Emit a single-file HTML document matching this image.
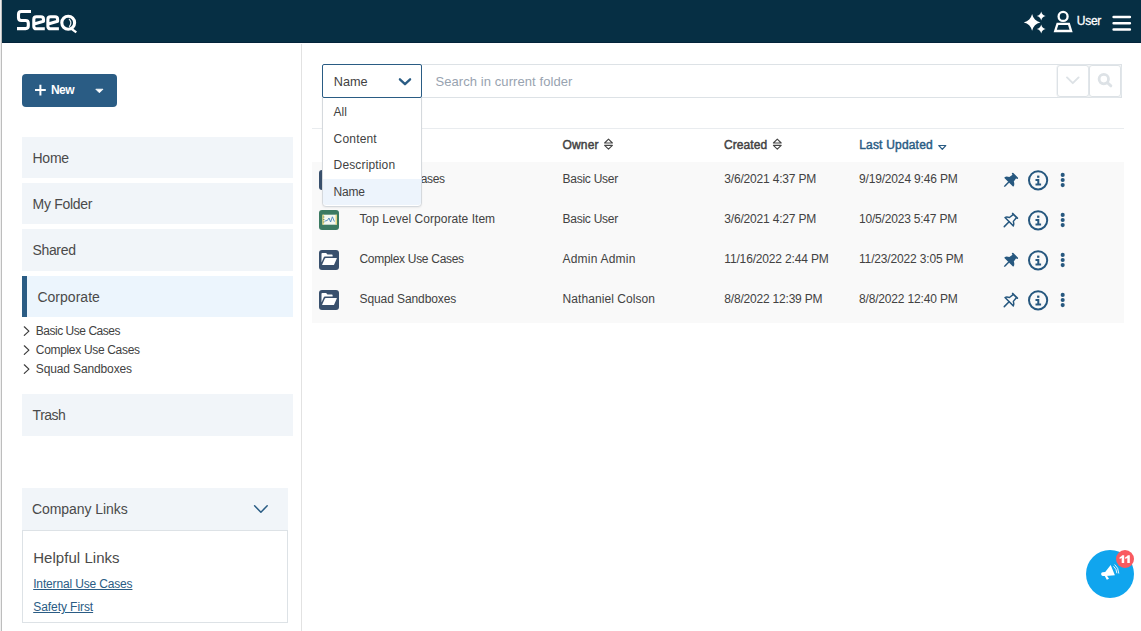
<!DOCTYPE html>
<html>
<head>
<meta charset="utf-8">
<title>Seeq</title>
<style>
html,body{margin:0;padding:0;}
body{width:1141px;height:631px;overflow:hidden;background:#fff;position:relative;font-family:"Liberation Sans",sans-serif;color:#3b3b3b;font-size:12px;}
.abs{position:absolute;}
.t{position:absolute;white-space:nowrap;line-height:1;}
svg{position:absolute;left:0;top:0;overflow:visible;}
.nav{position:absolute;left:22px;width:271px;background:#f1f5f9;}
</style>
</head>
<body>

<div class="abs" style="left:0;top:0;width:1px;height:631px;background:#efefef;"></div>
<div class="abs" style="left:1px;top:0;width:1px;height:631px;background:#bdbdbd;"></div>
<div class="abs" id="hdr" style="left:2px;top:0;width:1139px;height:43px;background:#062f44;"></div>
<div class="abs" style="left:2px;top:42px;width:1139px;height:1px;background:#03233a;"></div>
<div class="abs" style="left:301px;top:44px;width:1px;height:587px;background:#e2e2e2;"></div>
<div class="abs" style="left:22px;top:74px;width:95px;height:33px;background:#2a5c84;border-radius:4px;"></div>
<div class="t" id="newtxt" style="left:51px;top:83.9px;font-size:12px;color:#fff;font-weight:bold;letter-spacing:-0.594px;">New</div>
<div class="nav" style="top:137px;height:41px;"></div>
<div class="nav" style="top:183px;height:40.5px;"></div>
<div class="nav" style="top:229px;height:42px;"></div>
<div class="nav" style="top:394px;height:42px;"></div>
<div class="nav" style="top:276px;height:41px;background:#ecf5fd;"></div>
<div class="abs" style="left:22px;top:276px;width:5px;height:41px;background:#2a5c84;"></div>
<div class="t" id="nav_Home" style="left:32.5px;top:151.35px;font-size:14px;color:#4a4a4a;font-weight:normal;letter-spacing:-0.253px;">Home</div>
<div class="t" id="nav_MyFolder" style="left:32.5px;top:197.35px;font-size:14px;color:#4a4a4a;font-weight:normal;letter-spacing:-0.279px;">My Folder</div>
<div class="t" id="nav_Shared" style="left:32.4px;top:243.15px;font-size:14px;color:#4a4a4a;font-weight:normal;letter-spacing:-0.311px;">Shared</div>
<div class="t" id="nav_Trash" style="left:32.6px;top:408.15px;font-size:14px;color:#4a4a4a;font-weight:normal;letter-spacing:-0.495px;">Trash</div>
<div class="t" id="nav_Corporate" style="left:37.4px;top:289.85px;font-size:14px;color:#4a4a4a;font-weight:normal;letter-spacing:0.029px;">Corporate</div>
<div class="t" id="tree0" style="left:35.8px;top:324.84px;font-size:12px;color:#424242;font-weight:normal;letter-spacing:-0.477px;">Basic Use Cases</div>
<div class="t" id="tree1" style="left:35.8px;top:343.84px;font-size:12px;color:#424242;font-weight:normal;letter-spacing:-0.323px;">Complex Use Cases</div>
<div class="t" id="tree2" style="left:35.8px;top:362.84px;font-size:12px;color:#424242;font-weight:normal;letter-spacing:-0.128px;">Squad Sandboxes</div>
<div class="abs" style="left:22px;top:488px;width:266px;height:42px;background:#f1f5f9;"></div>
<div class="t" id="cltxt" style="left:32px;top:502.45px;font-size:14px;color:#4a4a4a;font-weight:normal;letter-spacing:-0.067px;">Company Links</div>
<div class="abs" style="left:22px;top:530px;width:264px;height:91px;border:1px solid #dde2e6;background:#fff;"></div>
<div class="t" id="hltxt" style="left:33.2px;top:549.5px;font-size:15px;color:#4a4a4a;font-weight:normal;letter-spacing:0.042px;">Helpful Links</div>
<div class="t" id="lnk1" style="left:33.2px;top:578.04px;font-size:12px;color:#2a5c84;font-weight:normal;letter-spacing:-0.156px;text-decoration:underline;">Internal Use Cases</div>
<div class="t" id="lnk2" style="left:33.2px;top:601.14px;font-size:12px;color:#2a5c84;font-weight:normal;letter-spacing:-0.062px;text-decoration:underline;">Safety First</div>
<div class="abs" style="left:421px;top:64px;width:699px;height:32px;border:1px solid #dde2e6;background:#fff;"></div>
<div class="t" id="ph" style="left:435.4px;top:75px;font-size:13px;color:#98a3b0;font-weight:normal;letter-spacing:0.082px;">Search in current folder</div>
<div class="abs" style="left:1057px;top:65px;width:30px;height:30px;border:1px solid #dde2e6;border-radius:3px;box-shadow:0 0 0 0.5px #e6eaed;"></div>
<div class="abs" style="left:1089px;top:65px;width:30px;height:30px;border:1px solid #dde2e6;border-radius:3px;box-shadow:0 0 0 0.5px #e6eaed;"></div>
<div class="abs" style="left:312px;top:128px;width:812px;height:1px;background:#e9ecef;"></div>
<div class="t" id="th-owner" style="left:562.4px;top:138.84px;font-size:12px;color:#424242;font-weight:normal;letter-spacing:0.214px;-webkit-text-stroke:0.45px #424242;">Owner</div>
<div class="t" id="th-created" style="left:724.1px;top:138.84px;font-size:12px;color:#424242;font-weight:normal;letter-spacing:0.049px;-webkit-text-stroke:0.45px #424242;">Created</div>
<div class="t" id="th-upd" style="left:859.2px;top:138.84px;font-size:12px;color:#2a5c84;font-weight:normal;letter-spacing:0.192px;-webkit-text-stroke:0.45px #2a5c84;">Last Updated</div>
<div class="abs" style="left:312px;top:162px;width:812px;height:161px;background:#f9f9f9;"></div>
<div class="t" id="r0c0" style="left:359.5px;top:172.84px;font-size:12px;color:#424242;font-weight:normal;letter-spacing:-0.427px;">Basic Use Cases</div>
<div class="t" id="r0c1" style="left:562.5px;top:172.84px;font-size:12px;color:#424242;font-weight:normal;letter-spacing:-0.257px;">Basic User</div>
<div class="t" id="r0c2" style="left:724.3px;top:172.84px;font-size:12px;color:#424242;font-weight:normal;letter-spacing:-0.182px;">3/6/2021 4:37 PM</div>
<div class="t" id="r0c3" style="left:859.0px;top:172.84px;font-size:12px;color:#424242;font-weight:normal;letter-spacing:-0.167px;">9/19/2024 9:46 PM</div>
<div class="t" id="r1c0" style="left:359.5px;top:212.84px;font-size:12px;color:#424242;font-weight:normal;letter-spacing:0.037px;">Top Level Corporate Item</div>
<div class="t" id="r1c1" style="left:562.5px;top:212.84px;font-size:12px;color:#424242;font-weight:normal;letter-spacing:-0.257px;">Basic User</div>
<div class="t" id="r1c2" style="left:724.3px;top:212.84px;font-size:12px;color:#424242;font-weight:normal;letter-spacing:-0.182px;">3/6/2021 4:27 PM</div>
<div class="t" id="r1c3" style="left:859.0px;top:212.84px;font-size:12px;color:#424242;font-weight:normal;letter-spacing:-0.198px;">10/5/2023 5:47 PM</div>
<div class="t" id="r2c0" style="left:359.5px;top:252.84px;font-size:12px;color:#424242;font-weight:normal;letter-spacing:-0.298px;">Complex Use Cases</div>
<div class="t" id="r2c1" style="left:562.5px;top:252.84px;font-size:12px;color:#424242;font-weight:normal;letter-spacing:0.21px;">Admin Admin</div>
<div class="t" id="r2c2" style="left:724.3px;top:252.84px;font-size:12px;color:#424242;font-weight:normal;letter-spacing:-0.159px;">11/16/2022 2:44 PM</div>
<div class="t" id="r2c3" style="left:859.0px;top:252.84px;font-size:12px;color:#424242;font-weight:normal;letter-spacing:-0.159px;">11/23/2022 3:05 PM</div>
<div class="t" id="r3c0" style="left:359.5px;top:292.84px;font-size:12px;color:#424242;font-weight:normal;letter-spacing:-0.092px;">Squad Sandboxes</div>
<div class="t" id="r3c1" style="left:562.5px;top:292.84px;font-size:12px;color:#424242;font-weight:normal;letter-spacing:0.074px;">Nathaniel Colson</div>
<div class="t" id="r3c2" style="left:724.3px;top:292.84px;font-size:12px;color:#424242;font-weight:normal;letter-spacing:-0.198px;">8/8/2022 12:39 PM</div>
<div class="t" id="r3c3" style="left:859.0px;top:292.84px;font-size:12px;color:#424242;font-weight:normal;letter-spacing:-0.167px;">8/8/2022 12:40 PM</div>
<div class="abs" style="left:319px;top:170px;width:20px;height:20px;border-radius:3px;background:#39506d;"></div>
<div class="abs" style="left:319px;top:210px;width:20px;height:20px;border-radius:3px;background:#3c7a62;"></div>
<div class="abs" style="left:319px;top:250px;width:20px;height:20px;border-radius:3px;background:#39506d;"></div>
<div class="abs" style="left:319px;top:290px;width:20px;height:20px;border-radius:3px;background:#39506d;"></div>
<div class="abs" id="dd" style="left:322px;top:97px;width:98px;height:107.5px;border:1px solid #d5d9dd;border-radius:0 0 4px 4px;background:#fff;box-shadow:0 1px 2px rgba(0,0,0,0.06);"></div>
<div class="abs" style="left:323px;top:179px;width:98px;height:26px;background:#edf4fc;border-radius:0 0 3px 3px;"></div>
<div class="t" id="opt0" style="left:333.6px;top:105.54px;font-size:12px;color:#424242;font-weight:normal;letter-spacing:-0.022px;">All</div>
<div class="t" id="opt1" style="left:333.6px;top:132.54px;font-size:12px;color:#424242;font-weight:normal;letter-spacing:0.178px;">Content</div>
<div class="t" id="opt2" style="left:333.6px;top:158.84px;font-size:12px;color:#424242;font-weight:normal;letter-spacing:0.147px;">Description</div>
<div class="t" id="opt3" style="left:333.6px;top:186.34px;font-size:12px;color:#424242;font-weight:normal;letter-spacing:-0.239px;">Name</div>
<div class="abs" id="sel" style="left:322px;top:64px;width:98px;height:32px;border:1px solid #2a5c84;border-radius:2px;background:#fff;"></div>
<div class="t" id="seltxt" style="left:333.8px;top:75.85px;font-size:12.7px;color:#424242;font-weight:normal;letter-spacing:-0.015px;">Name</div>
<div class="abs" style="left:1086px;top:550px;width:48px;height:48px;border-radius:50%;background:#10a5ee;"></div>
<div class="abs" style="left:1116px;top:550px;width:18px;height:18px;border-radius:50%;background:#f95a60;"></div>
<div class="t" id="usertxt" style="left:1076.8px;top:14.84px;font-size:12px;color:#fff;font-weight:normal;letter-spacing:-0.281px;-webkit-text-stroke:0.3px #fff;">User</div>
<svg id="icons" width="1141" height="631" viewBox="0 0 1141 631">
<!-- LOGO -->
<g id="logo" fill="none" stroke="#fff" stroke-width="3.1" stroke-linejoin="round">
  <path d="M31 11.5 H21.2 Q18.5 11.5 18.5 14.2 V17.8 Q18.5 20.5 21.2 20.5 H25.6 Q28.3 20.5 28.3 23.2 V25.8 Q28.3 28.6 25.6 28.6 H17"/>
  <path d="M44.8 28.8 H36.4 Q33.8 28.8 33.8 26.2 V19.4 Q33.8 16.8 36.4 16.8 H40.9 Q43.5 16.8 43.5 19.4 V21.3 L34.2 23.9"/>
  <path d="M58.9 28.8 H50.5 Q47.9 28.8 47.9 26.2 V19.4 Q47.9 16.8 50.5 16.8 H55 Q57.6 16.8 57.6 19.4 V21.3 L48.3 23.9"/>
  <ellipse cx="68.2" cy="22.7" rx="6.4" ry="6.5"/>
  <path d="M71.2 28.6 L76.3 32.4" stroke-width="2.4"/>
  <path d="M69 18.8 Q72.6 22.7 69.2 26.8" stroke-width="1.2" stroke="#e6ecef"/>
</g>

<!-- HEADER ICONS -->
<g id="sparkles" fill="#fff">
<path d="M1032.1 14.099999999999998 C1033.1 18.5 1036.0 21.4 1040.3999999999999 22.4 C1036.0 23.4 1033.1 26.299999999999997 1032.1 30.7 C1031.1 26.299999999999997 1028.1999999999998 23.4 1023.8 22.4 C1028.1999999999998 21.4 1031.1 18.5 1032.1 14.099999999999998Z"/>
<path d="M1041.2 11.600000000000001 C1041.75 14.000000000000002 1043.3 15.55 1045.7 16.1 C1043.3 16.650000000000002 1041.75 18.200000000000003 1041.2 20.6 C1040.65 18.200000000000003 1039.1000000000001 16.650000000000002 1036.7 16.1 C1039.1000000000001 15.55 1040.65 14.000000000000002 1041.2 11.600000000000001Z"/>
<path d="M1041.2 24.5 C1041.75 26.9 1043.3 28.45 1045.7 29 C1043.3 29.55 1041.75 31.1 1041.2 33.5 C1040.65 31.1 1039.1000000000001 29.55 1036.7 29 C1039.1000000000001 28.45 1040.65 26.9 1041.2 24.5Z"/>
</g>
<g id="usericon" fill="none" stroke="#fff" stroke-width="2.3">
  <circle cx="1063.1" cy="16.4" r="4.5"/>
  <path d="M1057.5 23.9 H1068.9 L1071.1 31 H1055.2 Z" stroke-linejoin="miter"/>
</g>
<g id="burger" stroke="#fff" stroke-width="2.5" stroke-linecap="round">
  <path d="M1113.6 16.9 H1129.9 M1113.6 23.2 H1129.9 M1113.6 29.5 H1129.9"/>
</g>

<!-- NEW BUTTON ICONS -->
<path d="M40.4 84.7 V95.4 M35 90.05 H45.8" stroke="#fff" stroke-width="2" fill="none"/>
<path d="M95.8 89.2 H103 L99.4 92.8 Z" fill="#fff" stroke="#fff" stroke-width="0.8" stroke-linejoin="round"/>

<!-- TREE CHEVRONS -->
<g fill="none" stroke="#3b3b3b" stroke-width="1.2" stroke-linecap="round" stroke-linejoin="round">
  <path d="M24.3 326.8 L28.9 331.1 L24.3 335.4"/>
  <path d="M24.3 345.8 L28.9 350.1 L24.3 354.4"/>
  <path d="M24.3 364.8 L28.9 369.1 L24.3 373.4"/>
</g>

<!-- COMPANY LINKS CHEVRON -->
<path d="M254.6 505.8 L260.9 512.2 L267.2 505.8" fill="none" stroke="#2a5c84" stroke-width="1.5" stroke-linecap="round" stroke-linejoin="round"/>

<!-- SEARCH BUTTON ICONS -->
<path d="M1067 77.4 L1072.8 83.2 L1078.6 77.4" fill="none" stroke="#dde2e6" stroke-width="1.9" stroke-linecap="round" stroke-linejoin="round"/>
<g fill="none" stroke="#dde2e6">
  <circle cx="1103.8" cy="79.1" r="4.7" stroke-width="2.8"/>
  <path d="M1107.6 82.9 L1110.9 85.9" stroke-width="2.8" stroke-linecap="round"/>
</g>

<!-- SELECT CHEVRON -->
<path d="M399.9 79.3 L405 84.2 L410.1 79.3" fill="none" stroke="#2a5c84" stroke-width="2.3" stroke-linecap="round" stroke-linejoin="round"/>

<!-- SORT ICONS -->
<g id="sorts" fill="none" stroke="#444" stroke-width="1.1" stroke-linejoin="round">
  <path d="M608.5 139.2 L612.4 143 H604.6 Z M604.6 145.4 H612.4 L608.5 149.2 Z"/>
  <path d="M777.3 139.2 L781.2 143 H773.4 Z M773.4 145.4 H781.2 L777.3 149.2 Z"/>
</g>
<path d="M938.8 145.5 H945.8 L942.3 149.3 Z" fill="none" stroke="#2a5c84" stroke-width="1.2" stroke-linejoin="round"/>

<!-- ROW ICONS: defs -->
<defs>
  <path id="tack" d="M298.028 214.267L285.793 96H328c13.255 0 24-10.745 24-24V24c0-13.255-10.745-24-24-24H56C42.745 0 32 10.745 32 24v48c0 13.255 10.745 24 24 24h42.207L85.972 214.267C37.465 236.82 0 277.261 0 328c0 13.255 10.745 24 24 24h136v104.007c0 1.242.289 2.467.845 3.578l24 48c2.941 5.882 11.364 5.893 14.311 0l24-48a8.008 8.008 0 0 0 .845-3.578V352h136c13.255 0 24-10.745 24-24 0-51.183-37.983-91.42-85.973-113.733z"/>
  <g id="pinF" fill="#27587f"><g transform="translate(9.97 -9.3) rotate(45) scale(1.02)">
    <path d="M-3.1 -7.8 H3.1 Q3.9 -7.8 3.9 -7 Q3.9 -6.1 3.1 -6.1 H2.5 L3.1 -2.2 Q5.9 -0.9 6.3 1.1 Q6.4 1.8 5.6 1.8 H-5.6 Q-6.4 1.8 -6.3 1.1 Q-5.9 -0.9 -3.1 -2.2 L-2.5 -6.1 H-3.1 Q-3.9 -6.1 -3.9 -7 Q-3.9 -7.8 -3.1 -7.8 Z"/>
    <path d="M-0.75 1.6 H0.75 V7 L0 8.5 L-0.75 7 Z"/>
  </g></g>
  <g id="pinO" fill="none" stroke="#27587f" stroke-linecap="round" stroke-linejoin="round"><g transform="translate(9.97 -9.3) rotate(45) scale(1.02)">
    <path d="M-3.2 -7 H3.2" stroke-width="1.7"/>
    <path d="M-2.2 -6.6 L-2.7 -2 Q-5.4 -0.7 -5.8 1.1 H5.8 Q5.4 -0.7 2.7 -2 L2.2 -6.6" stroke-width="1.45"/>
    <path d="M0 1.2 V7.9" stroke-width="1.5"/>
  </g></g>
  <g id="info" fill="none" stroke="#27587f">
    <circle cx="0" cy="0" r="9.1" stroke-width="2"/>
    <rect x="-1" y="-4.7" width="2.3" height="2.2" fill="#27587f" stroke="none"/>
    <path d="M-2.6 -0.4 H0.2 M0.2 -1.2 V4.2 M-2.6 4.2 H3" stroke-width="2"/>
  </g>
  <g id="kebab" fill="#27587f">
    <circle cx="0" cy="-5.1" r="2.05"/><circle cx="0" cy="0" r="2.05"/><circle cx="0" cy="5.1" r="2.05"/>
  </g>
  <g id="folder" fill="#fff">
    <path d="M2.7 3 H6.6 L8 4.4 H12.4 Q13.1 4.4 13.1 5.1 V6.6 H5.4 Q4.6 6.6 4.3 7.3 L2 12.6 V3.7 Q2 3 2.7 3 Z"/>
    <path d="M6.3 8 H17 Q17.6 8 17.3 8.6 L14.7 14.5 Q14.4 15.1 13.7 15.1 H3 Q2.4 15.1 2.7 14.5 L5.4 8.6 Q5.7 8 6.3 8 Z"/>
  </g>
</defs>

<use href="#pinF" x="1000" y="190.2"/>
<use href="#pinO" x="1000" y="230.2"/>
<use href="#pinF" x="1000" y="270.2"/>
<use href="#pinO" x="1000" y="310.2"/>
<use href="#info" x="1038.1" y="180.3"/>
<use href="#info" x="1038.1" y="220.3"/>
<use href="#info" x="1038.1" y="260.3"/>
<use href="#info" x="1038.1" y="300.3"/>
<use href="#kebab" x="1062.7" y="180"/>
<use href="#kebab" x="1062.7" y="220"/>
<use href="#kebab" x="1062.7" y="260"/>
<use href="#kebab" x="1062.7" y="300"/>

<use href="#folder" x="319.5" y="250"/>
<use href="#folder" x="319.5" y="290"/>

<!-- analysis icon -->
<g>
  <rect x="322.5" y="214.7" width="14.3" height="10" fill="#f4f8f2"/>
  <rect x="322.5" y="214.7" width="1.3" height="10" fill="#e8d36a"/>
  <rect x="335.6" y="214.7" width="1.2" height="10" fill="#e8d36a"/>
  <path d="M324.6 221.2 L327.4 220.4 L329 218 L330.6 222 L332.4 216.8 L334.4 221.6" fill="none" stroke="#4a86b8" stroke-width="0.9" stroke-linejoin="round"/>
  <path d="M323.2 217 h1.2 M323.2 219.5 h1.2 M323.2 222 h1.2" stroke="#3c7a62" stroke-width="0.8"/>
</g>

<!-- megaphone -->
<g fill="#fff">
  <path d="M1105.2 572 L1110.7 565.1 L1114.9 575.3 L1105.8 576.1 L1102.6 576 Q1101.1 575.6 1101.1 574 Q1101.1 572.4 1102.6 572.2 Z"/>
  <path d="M1104.5 575.6 L1106.8 575.4 L1109 578.8 L1106.8 579.8 Z"/>
  <path d="M1113.5 566.3 Q1116.6 568.8 1116.9 573.3" fill="none" stroke="#fff" stroke-width="0.9"/>
  <path d="M1114.6 564.5 Q1118.6 567.6 1118.8 573.5" fill="none" stroke="#fff" stroke-width="0.9"/>
  <path d="M1124.2 555.2 V563.1 H1121.7 V557.9 L1119.6000000000001 559.1 V557.2 Q1121.3 556.6 1122.2 555.2 Z"/>
  <path d="M1129.8 555.2 V563.1 H1127.3 V557.9 L1125.2 559.1 V557.2 Q1126.8999999999999 556.6 1127.8 555.2 Z"/>
</g>
</svg>

</body>
</html>
